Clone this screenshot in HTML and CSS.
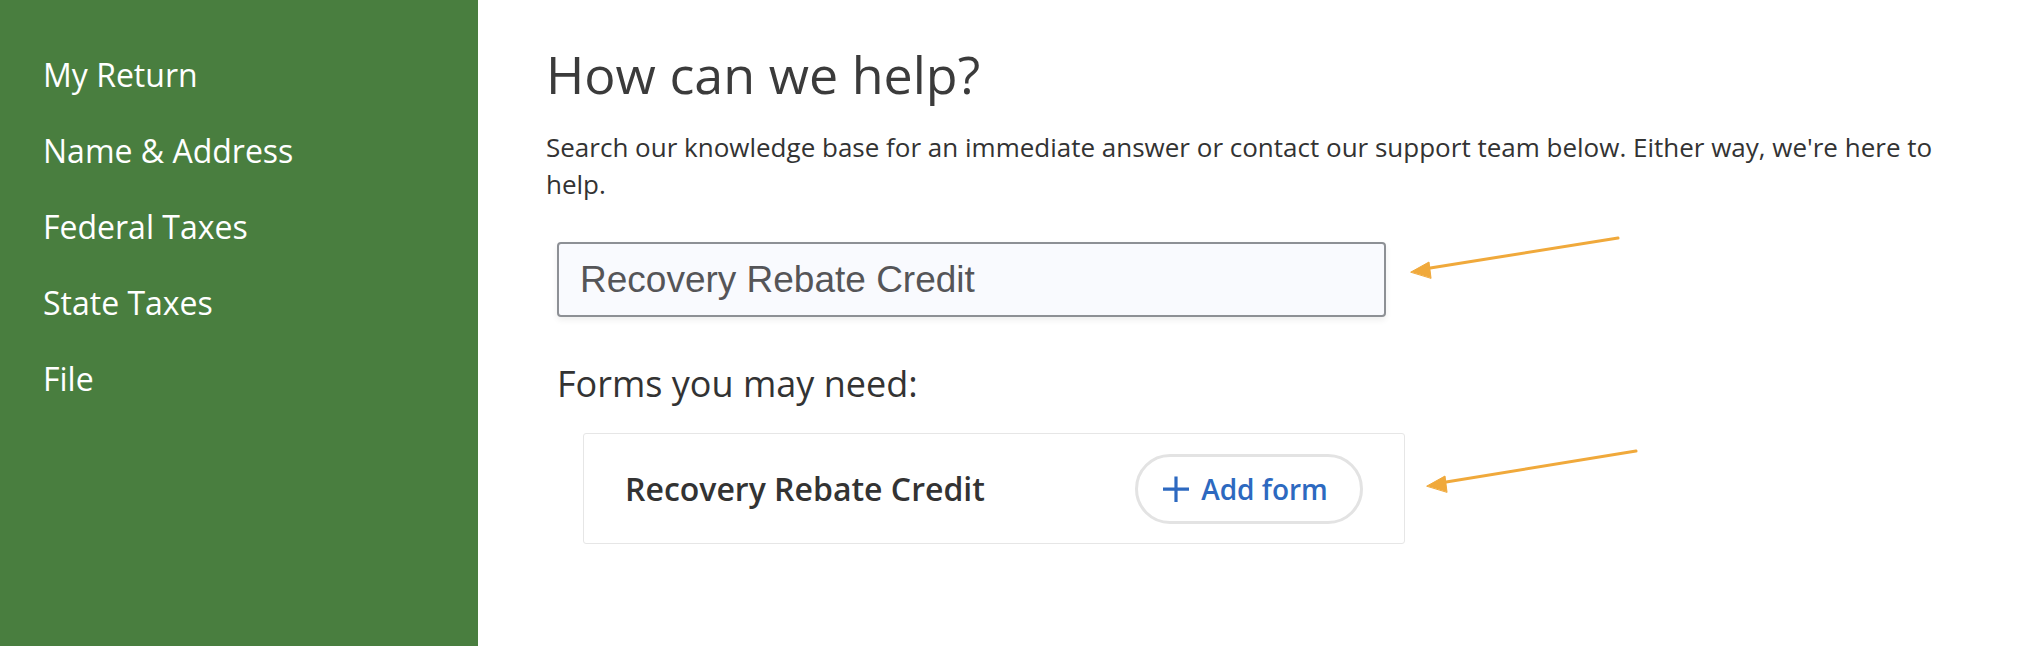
FILE: index.html
```html
<!DOCTYPE html>
<html lang="en">
<head>
<meta charset="utf-8">
<title>How can we help?</title>
<link rel="stylesheet" href="styles.css">
</head>
<body>
<div class="page">
  <nav class="sidebar">
    <a class="nav-item" href="#">My Return</a>
    <a class="nav-item" href="#">Name &amp; Address</a>
    <a class="nav-item" href="#">Federal Taxes</a>
    <a class="nav-item" href="#">State Taxes</a>
    <a class="nav-item" href="#">File</a>
  </nav>
  <main class="main">
    <h1 class="title">How can we help?</h1>
    <p class="lead">Search our knowledge base for an immediate answer or contact our support team below. Either way, we're here to help.</p>
    <input class="search" type="text" value="Recovery Rebate Credit">
    <h2 class="forms-title">Forms you may need:</h2>
    <div class="form-card">
      <span class="form-name">Recovery Rebate Credit</span>
      <button class="add-btn" type="button">
        <svg class="plus" viewBox="0 0 28 28" width="28" height="28" aria-hidden="true">
          <path d="M14 1.5V27M1 14.2H27" stroke="#2d69c0" stroke-width="3.2" fill="none"/>
        </svg>
        <span>Add form</span>
      </button>
    </div>
  </main>
</div>
<svg class="annotations" width="2030" height="646" viewBox="0 0 2030 646" aria-hidden="true">
  <g stroke="#f0a93b" stroke-width="3" stroke-linecap="round" fill="#f0a93b">
    <line x1="1618" y1="238" x2="1424" y2="269"/>
    <polygon points="1411,272 1429,262 1431,278" stroke-width="1" stroke-linejoin="round"/>
    <line x1="1636" y1="451" x2="1440" y2="483"/>
    <polygon points="1427,486 1445,476 1447,492" stroke-width="1" stroke-linejoin="round"/>
  </g>
</svg>
</body>
</html>
```

FILE: styles.css
```css
html, body {
  margin: 0;
  padding: 0;
  background: #ffffff;
}

body {
  position: relative;
  font-family: "Open Sans", "Noto Sans", sans-serif;
  color: #333333;
}

.page {
  display: flex;
  min-height: 646px;
}

.sidebar {
  width: 478px;
  flex: 0 0 478px;
  background: #497e3f;
  padding: 37px 0 0 43px;
  box-sizing: border-box;
  display: flex;
  flex-direction: column;
}

.nav-item {
  color: #ffffff;
  text-decoration: none;
  font-size: 32px;
  line-height: 76px;
  height: 76px;
}

.main {
  flex: 1;
  padding: 42px 68px 0 68px;
  display: flex;
  flex-direction: column;
  align-items: flex-start;
}

.title {
  margin: 0;
  font-size: 52px;
  line-height: 64px;
  font-weight: 400;
  color: #3b3b3b;
}

.lead {
  margin: 23px 0 0;
  font-size: 26px;
  line-height: 37px;
  color: #333333;
}

.search {
  margin: 39px 0 0 11px;
  width: 829px;
  height: 75px;
  box-sizing: border-box;
  border: 2px solid #8d9095;
  border-radius: 4px;
  background: #f9fafe;
  box-shadow: 0 3px 6px rgba(0, 0, 0, 0.07);
  padding: 0 21px;
  font-family: "Liberation Sans", Arial, sans-serif;
  font-size: 37px;
  color: #555558;
  outline: none;
}

.forms-title {
  margin: 43px 0 0 11px;
  font-size: 36px;
  line-height: 48px;
  font-weight: 400;
  color: #333333;
}

.form-card {
  margin: 25px 0 0 37px;
  width: 822px;
  height: 111px;
  box-sizing: border-box;
  border: 1px solid #e6e6e6;
  border-radius: 3px;
  padding: 0 41px;
  display: flex;
  align-items: center;
  justify-content: space-between;
}

.form-name {
  font-size: 32px;
  font-weight: 600;
  color: #333333;
}

.add-btn {
  width: 228px;
  height: 70px;
  box-sizing: border-box;
  border: 3px solid #e3e3e3;
  border-radius: 35px;
  background: #ffffff;
  display: inline-flex;
  align-items: center;
  justify-content: center;
  gap: 11px;
  padding: 0 8px 0 0;
  font-family: "Open Sans", "Noto Sans", sans-serif;
  font-size: 28px;
  font-weight: 600;
  color: #2d69c0;
  cursor: pointer;
}

.plus {
  display: block;
  flex: 0 0 auto;
}

.annotations {
  position: absolute;
  left: 0;
  top: 0;
  pointer-events: none;
}
```
